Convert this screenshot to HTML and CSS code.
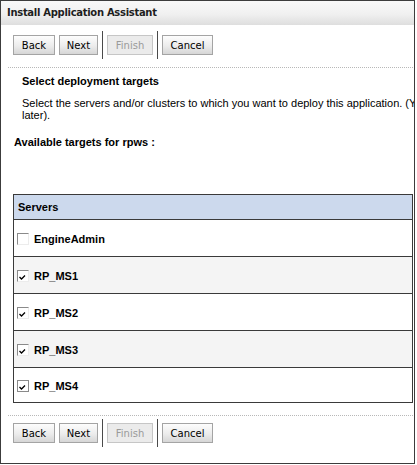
FILE: index.html
```html
<!DOCTYPE html>
<html>
<head>
<meta charset="utf-8">
<title>Install Application Assistant</title>
<link rel="stylesheet" href="styles.css">
</head>
<body>
<div class="frame">
  <div class="titlebar">Install Application Assistant</div>
  <div class="toolbar top">
    <div class="btnrow">
      <button class="btn b-back">Back</button>
      <button class="btn b-next">Next</button>
      <span class="sep"></span>
      <button class="btn b-finish" disabled>Finish</button>
      <span class="sep"></span>
      <button class="btn b-cancel">Cancel</button>
    </div>
  </div>
  <div class="content">
    <h2 class="step">Select deployment targets</h2>
    <p class="desc">Select the servers and/or clusters to which you want to deploy this application. (You can reconfigure deployment targets<br>later).</p>
    <h3 class="avail">Available targets for rpws :</h3>
    <table class="targets">
      <thead>
        <tr><th>Servers</th></tr>
      </thead>
      <tbody>
        <tr><td><span class="cb"></span><span class="lbl">EngineAdmin</span></td></tr>
        <tr class="alt"><td><span class="cb"><svg viewBox="0 0 9 9" width="9" height="9"><polyline points="1.5,5 3.5,7 7,3.5" fill="none" stroke="#000" stroke-width="1.3"/></svg></span><span class="lbl">RP_MS1</span></td></tr>
        <tr><td><span class="cb"><svg viewBox="0 0 9 9" width="9" height="9"><polyline points="1.5,5 3.5,7 7,3.5" fill="none" stroke="#000" stroke-width="1.3"/></svg></span><span class="lbl">RP_MS2</span></td></tr>
        <tr class="alt"><td><span class="cb"><svg viewBox="0 0 9 9" width="9" height="9"><polyline points="1.5,5 3.5,7 7,3.5" fill="none" stroke="#000" stroke-width="1.3"/></svg></span><span class="lbl">RP_MS3</span></td></tr>
        <tr><td><span class="cb full"><svg viewBox="0 0 9 9" width="9" height="9"><polyline points="1.5,5 3.5,7 7,3.5" fill="none" stroke="#000" stroke-width="1.3"/></svg></span><span class="lbl">RP_MS4</span></td></tr>
      </tbody>
    </table>
  </div>
  <div class="toolbar bottom">
    <div class="btnrow">
      <button class="btn b-back">Back</button>
      <button class="btn b-next">Next</button>
      <span class="sep"></span>
      <button class="btn b-finish" disabled>Finish</button>
      <span class="sep"></span>
      <button class="btn b-cancel">Cancel</button>
    </div>
  </div>
</div>
</body>
</html>
```

FILE: styles.css
```css
html, body {
  margin: 0;
  padding: 0;
  background: #ffffff;
}

body {
  font-family: "Liberation Sans", Arial, sans-serif;
  color: #000;
}

.frame {
  width: 413px;
  height: 462px;
  border: 1px solid #3c3c3c;
  overflow: hidden;
  background: #fff;
}

.titlebar {
  height: 24px;
  line-height: 24px;
  padding-left: 6px;
  font-family: "DejaVu Sans", sans-serif;
  font-weight: bold;
  font-size: 10px;
  letter-spacing: -0.3px;
  color: #1e1e1e;
  background: linear-gradient(#f8f8f8 0%, #f0f0f0 55%, #dedede 100%);
}

.toolbar {
  margin: 0 1px 0 7px;
  padding-left: 5px;
}

.toolbar.top {
  margin-top: 6px;
  padding-bottom: 8px;
  border-bottom: 1px dotted #b8b8b8;
}

.toolbar.bottom {
  margin-top: 12px;
  padding-top: 3px;
  border-top: 1px dotted #b8b8b8;
}

.btnrow {
  display: flex;
  align-items: center;
  gap: 4px;
  height: 28px;
}

.btn {
  height: 20px;
  padding: 0;
  margin: 0;
  border: 1px solid #a4a4a4;
  border-radius: 0;
  background: linear-gradient(#fdfdfd 0%, #ececec 55%, #d6d6d6 100%);
  font-family: "DejaVu Sans", sans-serif;
  font-size: 10px;
  color: #000;
  text-align: center;
}

.btn[disabled] {
  background: #ebebeb;
  color: #9a9a9a;
  border-color: #c6c6c6;
}

.b-back { width: 42px; }
.b-next { width: 39px; }
.b-finish { width: 46px; }
.b-cancel { width: 51px; }

.sep {
  width: 1px;
  height: 28px;
  background: #4a4a4a;
}

.content {
  padding: 0;
}

.step {
  margin: 6px 0 0 21px;
  font-size: 11px;
  line-height: 14px;
  font-weight: bold;
}

.desc {
  margin: 9px 0 0 21px;
  font-size: 11px;
  line-height: 12px;
  white-space: nowrap;
}

.avail {
  margin: 14px 0 0 13px;
  font-size: 11px;
  line-height: 14px;
  font-weight: bold;
}

.targets {
  margin: 45px 0 0 12px;
  width: 400px;
  border-collapse: collapse;
  border: 1px solid #3a3a3a;
}

.targets th {
  height: 24px;
  padding: 0 0 0 4px;
  text-align: left;
  font-size: 11px;
  font-weight: bold;
  background: #ccd9ed;
  border-bottom: 1px solid #3a3a3a;
}

.targets td {
  height: 36px;
  padding: 0 0 0 3px;
  border-bottom: 1px solid #3a3a3a;
  font-size: 11px;
  font-weight: bold;
  vertical-align: middle;
}

.targets tr:last-child td {
  height: 34px;
}

.targets tr.alt td {
  background: #f4f4f4;
}

.targets td .cb,
.targets td .lbl {
  vertical-align: middle;
}

.cb {
  display: inline-block;
  width: 10px;
  height: 10px;
  border-top: 1px solid #8a8a8a;
  border-left: 1px solid #8a8a8a;
  border-right: 1px solid #ececec;
  border-bottom: 1px solid #ececec;
  background: #fff;
  position: relative;
}

.cb.full {
  border-right-color: #8a8a8a;
  border-bottom-color: #8a8a8a;
}

.cb svg {
  display: block;
  margin: 1px 0 0 0;
}

.lbl {
  margin-left: 5px;
}
```
